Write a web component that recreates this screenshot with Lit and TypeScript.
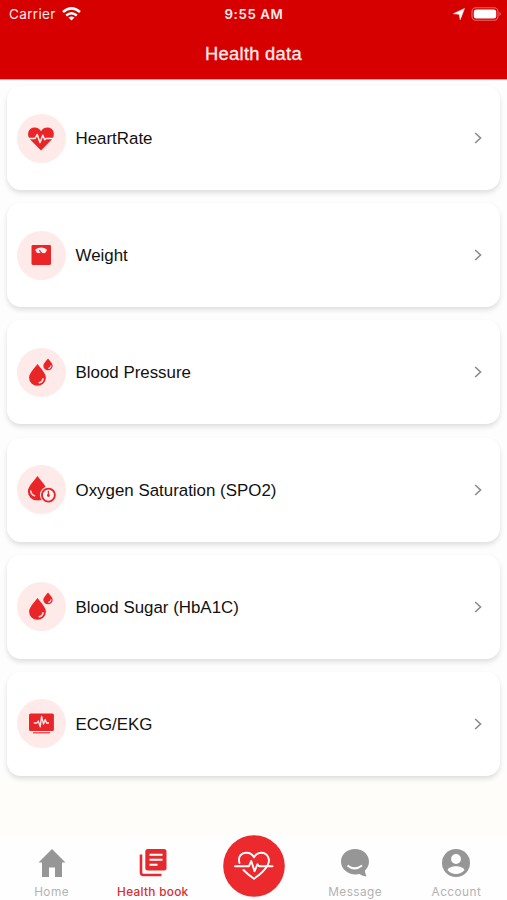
import { LitElement, html, css, svg } from "lit";
import { customElement } from "lit/decorators.js";

const drops = svg`
  <path fill="#ea2528" d="M20.500 16C24 21 28.900 25.200 28.900 29.800A8.400 8 0 0 1 12.100 29.800C12.100 25.200 17 21 20.500 16Z"/>
  <path d="M22.300 34.700Q25.600 34 26 30.800" stroke="#ffdcdc" stroke-width="1.600" fill="none" stroke-linecap="round"/>
  <path fill="#ea2528" d="M31 10.400C32.800 12.900 35.700 15.200 35.700 17.800A4.700 4.500 0 0 1 26.300 17.800C26.300 15.200 29.200 12.900 31 10.400Z"/>
  <path d="M31.700 20.400Q33.700 20 34 17.900" stroke="#ffdcdc" stroke-width="1.100" fill="none" stroke-linecap="round"/>`;

const icons: Record<string, unknown> = {
  heart: svg`
    <g transform="translate(-.5 -1)">
      <path fill="#ea2528" d="M24.500 37.500L13.700 26.600C9.700 22 11.700 14.500 18 14.500C21.200 14.500 23.300 16.200 24.500 18.200C25.700 16.200 27.800 14.500 31 14.500C37.300 14.500 39.300 22 35.300 26.600Z"/>
      <path d="M11 25.500H18.500L20.700 21.500L23.500 29.500L26.300 22.200L28.200 26.800L29.500 25.500H38" fill="none" stroke="#fff0f0" stroke-width="1.500" stroke-linejoin="round"/>
    </g>`,
  scale: svg`
    <rect x="14.500" y="14" width="19.500" height="20" rx="1.400" fill="#ea2528"/>
    <path d="M18.200 18.500Q24.200 14.500 30 18.500Q29.500 21.500 27.500 22.300Q24.200 21.300 20.800 22.300Q18.800 21.500 18.200 18.500Z" fill="#ffeaea"/>
    <path d="M24.600 22.300L22.300 19" stroke="#ea2528" stroke-width="1.200"/>`,
  drops,
  oxygen: svg`
    <path fill="#ea2528" d="M20.500 11C24.300 16.500 30 21.300 30 26.500A9.400 8.900 0 0 1 10.900 26.500C10.900 21.300 16.700 16.500 20.500 11Z"/>
    <path d="M13.700 26Q14.200 29.800 17.500 30.700" stroke="#ffdcdc" stroke-width="1.600" fill="none" stroke-linecap="round"/>
    <circle cx="31.400" cy="30.100" r="8.500" fill="#ffeaea"/>
    <circle cx="31.400" cy="30.100" r="6.500" fill="#fff0f0" stroke="#ea2528" stroke-width="1.900"/>
    <path d="M31.400 25.700V30" stroke="#ea2528" stroke-width="1.300"/>
    <circle cx="31.400" cy="30.500" r="1.400" fill="#ea2528"/>`,
  ecg: svg`
    <rect x="12" y="14.500" width="24.900" height="17.500" rx="1.500" fill="#ea2528"/>
    <path d="M16 33.800H33" stroke="#ee5558" stroke-width="1.600"/>
    <path d="M16.800 24H20L21.300 22L23.200 27.800L24.600 17.300L26.500 25L28.300 20.500L29.500 24H32" fill="none" stroke="#ffeaea" stroke-width="1.300" stroke-linejoin="round"/>`,
};

const rows = [
  ["heart", "HeartRate"],
  ["scale", "Weight"],
  ["drops", "Blood Pressure"],
  ["oxygen", "Oxygen Saturation (SPO2)"],
  ["drops", "Blood Sugar (HbA1C)"],
  ["ecg", "ECG/EKG"],
] as const;

@customElement("app-root")
export class AppRoot extends LitElement {
  static styles = css`
    :host {
      display: flex;
      flex-direction: column;
      width: 100%;
      height: 900px;
      overflow: hidden;
      background: #fefefe;
      font-family: "Liberation Sans", sans-serif;
    }
    svg { display: block; flex: none; }
    header {
      flex: none;
      box-sizing: border-box;
      height: 80px;
      border-bottom: 1px solid #f5a09c;
      background: #d60000;
      color: #ffecec;
    }
    .status {
      display: grid;
      grid-template-columns: 1fr auto 1fr;
      align-items: center;
      height: 27px;
      padding: 0 5px 0 9px;
      font: 400 13.500px/27px Inter, sans-serif;
    }
    .left, .right { display: flex; align-items: center; }
    .left { gap: 6px; letter-spacing: 0.350px; }
    .left span, .time { padding-top: 1px; line-height: 26px; }
    .right { justify-content: flex-end; gap: 6px; }
    .time { margin-right: 3px; letter-spacing: 0.600px; font-weight: 600; font-size: 13.300px; }
    h1 {
      margin: 0;
      font: 400 18.300px/53px "Liberation Sans", sans-serif;
      letter-spacing: 0.300px;
      text-align: center;
      -webkit-text-stroke: 0.300px #ffecec;
    }
    main {
      flex: 1;
      display: flex;
      flex-direction: column;
      gap: 13.200px;
      padding: 6px 7px 0;
      background: linear-gradient(#fdfdfd 0 690px, #fffdf9 715px 755px, #fefefe 762px);
    }
    .card {
      flex: none;
      display: flex;
      align-items: center;
      box-sizing: border-box;
      height: 104px;
      padding: 0 16px 0 10px;
      border-radius: 14px;
      background: #fff;
      box-shadow: 0 3px 5px rgba(0, 0, 0, 0.120);
    }
    .disc { width: 49px; height: 49px; border-radius: 50%; background: #ffeaea; }
    .label {
      flex: 1;
      margin-left: 9.500px;
      padding-top: 2px;
      font-size: 16.900px;
      color: #111;
    }
    nav {
      flex: none;
      display: grid;
      grid-template-columns: repeat(5, 1fr);
      height: 65px;
      padding-left: 1px;
      background: #fefefe;
    }
    .tab {
      display: flex;
      flex-direction: column;
      align-items: center;
      gap: 5px;
      padding-top: 13px;
      color: #b3b3b3;
      font: 400 11.800px/16px Inter, sans-serif;
      letter-spacing: 0.450px;
      white-space: nowrap;
    }
    .active { color: #dd2b30; font-weight: 500; letter-spacing: 0.300px; }
    .main-tab { padding: 0; }
  `;

  render() {
    return html`
      <header>
        <div class="status">
          <div class="left">
            <span>Carrier</span>
            <svg width="19" height="14" viewBox="0 0 19 14" fill="none" stroke="#fff" stroke-width="2.500">
              <path d="M1 5Q9.500 -2.200 18 5"/>
              <path d="M4.200 8.500Q9.500 4 14.800 8.500"/>
              <path d="M9.500 13.500L6.500 10.500Q9.500 8.300 12.500 10.500Z" fill="#fff" stroke="none"/>
            </svg>
          </div>
          <span class="time">9:55 AM</span>
          <div class="right">
            <svg width="12" height="12" viewBox="0 0 12 12"><path d="M11.500.5L7.200 11.700L6.200 6.300L.3 5.700Z" fill="#fff" stroke="#fff" stroke-width=".5"/></svg>
            <svg width="31" height="14" viewBox="0 0 31 14">
              <rect x="1" y=".8" width="26" height="12.400" rx="4" fill="none" stroke="#ec6a6a" stroke-width="1.100"/>
              <rect x="2.800" y="2.500" width="22.400" height="9" rx="2.500" fill="#fff"/>
              <path d="M28.500 4.800Q31.200 7 28.500 9.200Z" fill="#ec6a6a"/>
            </svg>
          </div>
        </div>
        <h1>Health data</h1>
      </header>
      <main>
        ${rows.map(([icon, label]) => html`
          <div class="card">
            <svg class="disc" viewBox="0 0 49 49">${icons[icon]}</svg>
            <span class="label">${label}</span>
            <svg width="12" height="14" viewBox="0 0 12 14"><path d="M3.200 2L8.500 7L3.200 12" fill="none" stroke="#8e8e8e" stroke-width="1.700"/></svg>
          </div>`)}
      </main>
      <nav>
        <div class="tab">
          <svg width="28" height="31" viewBox="0 0 28 31"><path d="M14 1L27.500 14.500H24V29H17V19.500H11V29H4V14.500H.5Z" fill="#969696"/></svg>
          <span>Home</span>
        </div>
        <div class="tab active">
          <svg width="28" height="31" viewBox="0 0 28 31">
            <path d="M2 6.500V24.500Q2 27 4.500 27H22.500" fill="none" stroke="#e42a2e" stroke-width="2.600"/>
            <rect x="6.300" y="1" width="21.200" height="21.500" rx="2.500" fill="#e42a2e"/>
            <path d="M10.500 6.800H23.500M10.500 11.800H23.500M10.500 16.800H18.500" stroke="#fff" stroke-width="2"/>
          </svg>
          <span>Health book</span>
        </div>
        <div class="tab main-tab">
          <svg width="62" height="62" viewBox="0 0 62 62">
            <circle cx="31" cy="31" r="30.800" fill="#ec292d"/>
            <g fill="none" stroke="#fff" stroke-width="1.900" stroke-linejoin="round" stroke-linecap="round">
              <path d="M12 31.200H26L28.300 26L31.500 36.300L34.500 29.200L36 31.200H49.500"/>
              <path d="M16.500 28C14.500 21.500 18.500 17.700 23.500 17.700C27 17.700 29.500 19.500 31 22.300C32.500 19.500 35 17.700 38.500 17.700C44.500 17.700 48 24.500 44.500 30.500C42 35 36.500 40 31 43.700C27.500 41.300 23.500 38.300 20.500 35"/>
            </g>
          </svg>
        </div>
        <div class="tab">
          <svg width="28" height="31" viewBox="0 0 28 31">
            <path d="M14 1C21.800 1 28 6.300 28 13.500C28 17 26.500 20.200 24 22.500Q23.800 25 25.500 28.500Q21.500 28.300 18.500 26C9 28 0 22.500 0 13.500C0 6.300 6.200 1 14 1Z" fill="#969696"/>
            <path d="M6.500 17.500Q13.500 23.300 21 17.500" fill="none" stroke="#fefefe" stroke-width="2"/>
          </svg>
          <span>Message</span>
        </div>
        <div class="tab">
          <svg width="28" height="31" viewBox="0 0 28 31">
            <circle cx="14" cy="15" r="14" fill="#969696"/>
            <circle cx="14" cy="11" r="4.900" fill="#fefefe"/>
            <path d="M5.500 22C7.500 17 20.500 17 22.500 22C18.500 27.300 9.500 27.300 5.500 22Z" fill="#fefefe"/>
          </svg>
          <span>Account</span>
        </div>
      </nav>`;
  }
}
